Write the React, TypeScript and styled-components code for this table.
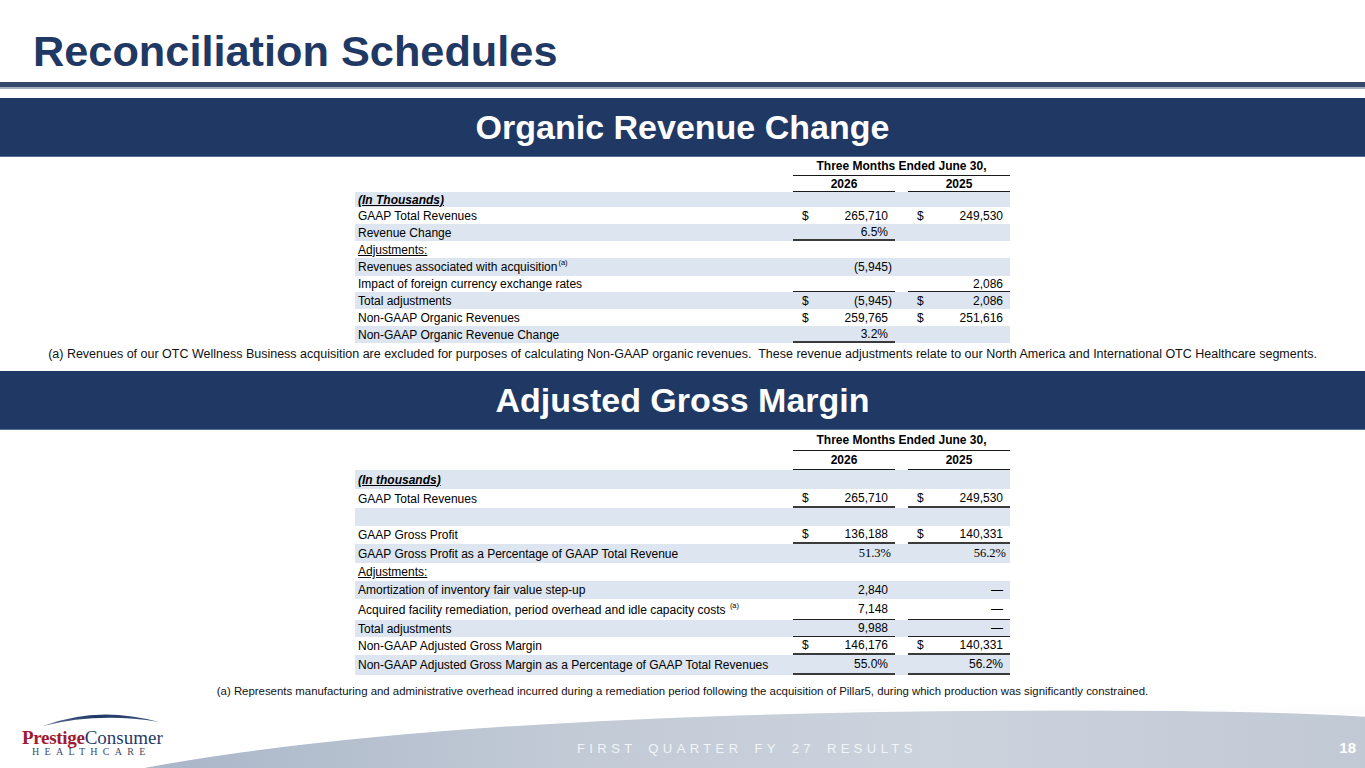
import React from "react";
import styled, { createGlobalStyle } from "styled-components";

const GlobalStyle = createGlobalStyle`
  html, body { margin: 0; padding: 0; background: #ffffff; }
  body {
    width: 1365px; height: 768px; overflow: hidden;
    font-family: "Liberation Sans", Arial, sans-serif; color: #000;
  }
  #root { width: 1365px; height: 768px; }
  * { box-sizing: border-box; }
`;

const Slide = styled.div`
  display: flex; flex-direction: column;
  width: 1365px; height: 768px; overflow: hidden; background: #fff;
`;

const Title = styled.h1`
  margin: 0; padding: 30px 0 0 33px;
  font-size: 43.3px; line-height: 43px; font-weight: 700; color: #1f3864;
`;

const Rule = styled.div`
  margin-top: 9px; height: 7px;
  background: #34486c; border-bottom: 2px solid #a3aec0;
`;

const Banner = styled.div<{ $mt: number }>`
  margin-top: ${p => p.$mt}px; height: 59px; flex: none;
  background: #1f3864; border-bottom: 1px solid #5a6d92;
  display: flex; align-items: center; justify-content: center;
  color: #fff; font-size: 34px; line-height: 1; font-weight: 700;
`;

const Table = styled.div`
  width: 655px; margin-left: 355px; display: flex; flex-direction: column;
`;

const HeadRow = styled.div<{ $h: number }>`
  display: grid; grid-template-columns: 438px 102px 13px 102px;
  height: ${p => p.$h}px;
`;

const HeadSpan = styled.div`
  grid-column: 2 / 5;
  display: flex; align-items: center; justify-content: center;
  border-bottom: 1px solid #1a1a1a;
  font-size: 12px; font-weight: 700;
`;

const HeadCell = styled.div`
  display: flex; align-items: center; justify-content: center;
  border-bottom: 1px solid #1a1a1a;
  font-size: 12px; font-weight: 700;
`;

const Row = styled.div<{ $h: number; $band?: boolean }>`
  display: grid; grid-template-columns: 438px 102px 13px 102px;
  height: ${p => p.$h}px;
  background: ${p => (p.$band ? "#dce5f0" : "transparent")};
  font-size: 12px;
`;

const Label = styled.div<{ $kind?: "head" | "under" }>`
  display: flex; align-items: center; padding-left: 3px; white-space: nowrap;
  span {
    text-decoration: ${p => (p.$kind ? "underline" : "none")};
    font-weight: ${p => (p.$kind === "head" ? 700 : 400)};
    font-style: ${p => (p.$kind === "head" ? "italic" : "normal")};
  }
`;

const Val = styled.div<{ $line?: "thin" | "thick" }>`
  display: flex; align-items: center; justify-content: space-between;
  padding: 0 7px 0 9px;
  border-bottom: ${p =>
    p.$line === "thick" ? "2px solid #3b3b3b" : p.$line === "thin" ? "1px solid #222" : "none"};
`;

const Num = styled.span<{ $hang?: boolean; $serif?: boolean }>`
  margin-left: auto;
  margin-right: ${p => (p.$hang ? -4 : p.$serif ? -3 : 0)}px;
  font-family: ${p => (p.$serif ? '"Liberation Serif", "Times New Roman", serif' : "inherit")};
  font-size: ${p => (p.$serif ? "12.5px" : "12px")};
`;

const Gap = styled.div``;

const Sup = styled.sup`
  font-size: 7.5px; line-height: 0; vertical-align: 6px; margin-left: 1px;
`;

const Footnote = styled.div<{ $h: number; $mt: number; $fs: number }>`
  margin-top: ${p => p.$mt}px; height: ${p => p.$h}px; flex: none;
  display: flex; align-items: center; justify-content: center;
  font-size: ${p => p.$fs}px; color: #111; white-space: pre;
`;

const Footer = styled.div`
  position: relative; flex: 1;
`;

const Wave = styled.svg`
  position: absolute; left: 0; top: 0; width: 100%; height: 100%;
`;

const FooterInner = styled.div`
  position: relative; display: flex; align-items: flex-start;
  padding: 13px 9px 0 22px;
`;

const Logo = styled.div`
  width: 555px; display: flex; flex-direction: column; flex: none;
`;

const LogoWord = styled.div`
  font-family: "Liberation Serif", "Times New Roman", serif;
  font-size: 19px; line-height: 19px; white-space: nowrap;
`;

const Prestige = styled.span`
  color: #a01a31; font-weight: 700; letter-spacing: -0.3px;
`;

const Consumer = styled.span`
  color: #2a3a6a;
`;

const LogoSub = styled.div`
  font-family: "Liberation Serif", "Times New Roman", serif;
  font-size: 10px; line-height: 10px; letter-spacing: 5.3px;
  color: #3c4a6c; padding-left: 10px;
`;

const FooterText = styled.div`
  margin-top: 30px; font-size: 13px; line-height: 13px;
  letter-spacing: 4.4px; word-spacing: 4px; color: #f2f4f7; white-space: nowrap;
`;

const PageNum = styled.div`
  margin-left: auto; margin-top: 28px;
  font-size: 15px; line-height: 15px; font-weight: 700; color: #fff;
`;

type Cell = { d?: boolean; v?: string; hang?: boolean; serif?: boolean; line?: "thin" | "thick" };
type RowDef = {
  label: React.ReactNode;
  h: number;
  band?: boolean;
  kind?: "head" | "under";
  c1?: Cell;
  c2?: Cell;
};

const ValCell: React.FC<{ c?: Cell }> = ({ c }) => (
  <Val $line={c?.line}>
    {c?.d ? <span>$</span> : null}
    {c?.v ? (
      <Num $hang={c.hang} $serif={c.serif}>
        {c.v}
      </Num>
    ) : null}
  </Val>
);

const DataTable: React.FC<{ rows: RowDef[]; h1: number; h2: number }> = ({ rows, h1, h2 }) => (
  <Table>
    <HeadRow $h={h1}>
      <HeadSpan>Three Months Ended June 30,</HeadSpan>
    </HeadRow>
    <HeadRow $h={h2}>
      <div />
      <HeadCell>2026</HeadCell>
      <Gap />
      <HeadCell>2025</HeadCell>
    </HeadRow>
    {rows.map((r, i) => (
      <Row key={i} $h={r.h} $band={r.band}>
        <Label $kind={r.kind}>
          <span>{r.label}</span>
        </Label>
        <ValCell c={r.c1} />
        <Gap />
        <ValCell c={r.c2} />
      </Row>
    ))}
  </Table>
);

const organicRows: RowDef[] = [
  { label: "(In Thousands)", h: 15, band: true, kind: "head" },
  { label: "GAAP Total Revenues", h: 17, c1: { d: true, v: "265,710" }, c2: { d: true, v: "249,530" } },
  { label: "Revenue Change", h: 17, band: true, c1: { v: "6.5%", line: "thick" } },
  { label: "Adjustments:", h: 17, kind: "under" },
  {
    label: (
      <>
        Revenues associated with acquisition<Sup>(a)</Sup>
      </>
    ),
    h: 18,
    band: true,
    c1: { v: "(5,945)", hang: true },
  },
  { label: "Impact of foreign currency exchange rates", h: 16, c1: { line: "thin" }, c2: { v: "2,086", line: "thin" } },
  { label: "Total adjustments", h: 17, band: true, c1: { d: true, v: "(5,945)", hang: true }, c2: { d: true, v: "2,086" } },
  { label: "Non-GAAP Organic Revenues", h: 17, c1: { d: true, v: "259,765" }, c2: { d: true, v: "251,616" } },
  { label: "Non-GAAP Organic Revenue Change", h: 17, band: true, c1: { v: "3.2%", line: "thick" } },
];

const marginRows: RowDef[] = [
  { label: "(In thousands)", h: 19, band: true, kind: "head" },
  {
    label: "GAAP Total Revenues",
    h: 19,
    c1: { d: true, v: "265,710", line: "thick" },
    c2: { d: true, v: "249,530", line: "thick" },
  },
  { label: "", h: 18, band: true },
  {
    label: "GAAP Gross Profit",
    h: 18,
    c1: { d: true, v: "136,188", line: "thick" },
    c2: { d: true, v: "140,331", line: "thick" },
  },
  {
    label: "GAAP Gross Profit as a Percentage of GAAP Total Revenue",
    h: 19,
    band: true,
    c1: { v: "51.3%", serif: true },
    c2: { v: "56.2%", serif: true },
  },
  { label: "Adjustments:", h: 18, kind: "under" },
  { label: "Amortization of inventory fair value step-up", h: 18, band: true, c1: { v: "2,840" }, c2: { v: "—" } },
  {
    label: (
      <>
        Acquired facility remediation, period overhead and idle capacity costs <Sup>(a)</Sup>
      </>
    ),
    h: 21,
    c1: { v: "7,148", line: "thin" },
    c2: { v: "—", line: "thin" },
  },
  { label: "Total adjustments", h: 17, band: true, c1: { v: "9,988", line: "thin" }, c2: { v: "—", line: "thin" } },
  {
    label: "Non-GAAP Adjusted Gross Margin",
    h: 18,
    c1: { d: true, v: "146,176", line: "thick" },
    c2: { d: true, v: "140,331", line: "thick" },
  },
  {
    label: "Non-GAAP Adjusted Gross Margin as a Percentage of GAAP Total Revenues",
    h: 20,
    band: true,
    c1: { v: "55.0%", line: "thick" },
    c2: { v: "56.2%", line: "thick" },
  },
];

const LogoArc = () => (
  <svg width="145" height="16" viewBox="0 0 145 16">
    <defs>
      <linearGradient id="arcg" x1="0" x2="1" y1="0" y2="0">
        <stop offset="0" stopColor="#5b6f98" />
        <stop offset="0.45" stopColor="#1f3864" />
        <stop offset="1" stopColor="#3d5282" />
      </linearGradient>
    </defs>
    <path d="M21 14 Q 76 -7 137 10 Q 76 0 21 14 Z" fill="url(#arcg)" />
  </svg>
);

const FooterWave = () => (
  <Wave viewBox="0 0 1365 69" preserveAspectRatio="none">
    <defs>
      <linearGradient id="wg" x1="0" x2="1" y1="0" y2="0">
        <stop offset="0" stopColor="#a9b6c8" />
        <stop offset="0.35" stopColor="#c2cad6" />
        <stop offset="0.65" stopColor="#ccd3dd" />
        <stop offset="1" stopColor="#c1c9d5" />
      </linearGradient>
      <linearGradient id="hl" x1="0" x2="0" y1="0" y2="1">
        <stop offset="0" stopColor="#ffffff" />
        <stop offset="1" stopColor="#e6e9ee" />
      </linearGradient>
    </defs>
    <path d="M320 69 C 520 18, 850 2, 1365 4 L 1365 69 Z" fill="url(#hl)" />
    <path d="M140 69 C 350 30, 650 13, 1000 11 C 1200 10, 1300 13, 1365 17 L 1365 69 Z" fill="url(#wg)" />
    <path d="M140 69 C 350 30, 650 13, 1000 11 C 1200 10, 1300 13, 1365 17" fill="none" stroke="#ffffff" strokeWidth="1.5" />
  </Wave>
);

export default function App() {
  return (
    <>
      <GlobalStyle />
      <Slide>
        <Title>Reconciliation Schedules</Title>
        <Rule />
        <Banner $mt={9}>Organic Revenue Change</Banner>
        <DataTable rows={organicRows} h1={19} h2={16} />
        <Footnote $h={22} $mt={0} $fs={12.5}>
          {"(a) Revenues of our OTC Wellness Business acquisition are excluded for purposes of calculating Non-GAAP organic revenues.  These revenue adjustments relate to our North America and International OTC Healthcare segments."}
        </Footnote>
        <Banner $mt={6}>Adjusted Gross Margin</Banner>
        <DataTable rows={marginRows} h1={21} h2={19} />
        <Footnote $h={16} $mt={8} $fs={11.4}>
          {"(a) Represents manufacturing and administrative overhead incurred during a remediation period following the acquisition of Pillar5, during which production was significantly constrained."}
        </Footnote>
        <Footer>
          <FooterWave />
          <FooterInner>
            <Logo>
              <LogoArc />
              <LogoWord>
                <Prestige>Prestige</Prestige>
                <Consumer>Consumer</Consumer>
              </LogoWord>
              <LogoSub>HEALTHCARE</LogoSub>
            </Logo>
            <FooterText>FIRST QUARTER FY 27 RESULTS</FooterText>
            <PageNum>18</PageNum>
          </FooterInner>
        </Footer>
      </Slide>
    </>
  );
}
